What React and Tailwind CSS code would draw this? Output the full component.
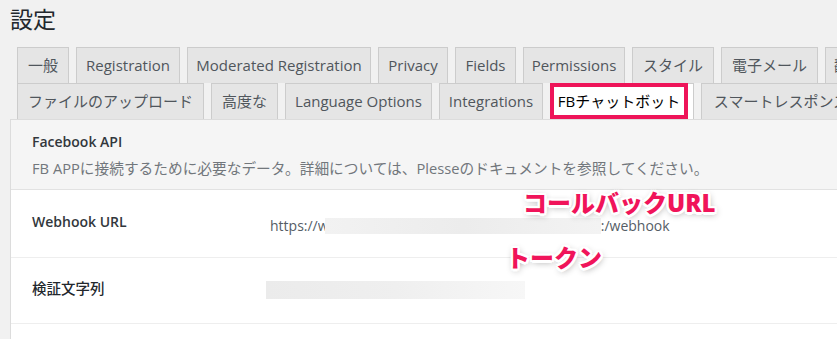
const rowOne = [
    { label: '一般', w: 'w-[52px]' },
    { label: 'Registration', w: 'w-[104px]' },
    { label: 'Moderated Registration', w: 'w-[184px]' },
    { label: 'Privacy', w: 'w-[70px]' },
    { label: 'Fields', w: 'w-[61px]' },
    { label: 'Permissions', w: 'w-[102px]' },
    { label: 'スタイル', w: 'w-[82px]' },
    { label: '電子メール', w: 'w-[97px]' },
    { label: '翻訳', w: 'w-[48px]' },
];

const rowTwo = [
    { label: 'ファイルのアップロード', w: 'w-[187px]' },
    { label: '高度な', w: 'w-[67px]' },
    { label: 'Language Options', w: 'w-[147px]' },
    { label: 'Integrations', w: 'w-[104px]' },
    { label: 'FBチャットボット', w: 'w-[144px]', active: true },
    { label: 'スマートレスポンス', w: 'w-[160px]' },
];

const Tab = ({ tab }) => {
    if (tab.active) {
        return (
            <div className={`relative shrink-0 h-[36px] bg-white border border-b-0 border-[#ccc] ${tab.w}`}>
                <div className="absolute left-[-1px] top-[-1px] w-[138px] h-[36px] border-[4px] border-[#ee1459] flex items-center justify-center text-[15px] text-black">
                    {tab.label}
                </div>
            </div>
        );
    }
    return (
        <div
            className={`shrink-0 h-[36px] flex items-center justify-center whitespace-nowrap bg-[#e5e5e5] border border-b-0 border-[#ccc] text-[15px] text-[#50565c] ${tab.w}`}
        >
            {tab.label}
        </div>
    );
};

const Annotation = ({ children, className }) => (
    <div
        className={`absolute text-[24px] leading-none font-black text-[#f0145a] whitespace-nowrap [text-shadow:2.5px_0_0_#fff,-2.5px_0_0_#fff,0_2.5px_0_#fff,0_-2.5px_0_#fff,2px_2px_0_#fff,-2px_-2px_0_#fff,2px_-2px_0_#fff,-2px_2px_0_#fff,1px_2px_7px_rgba(0,0,0,0.45)] ${className}`}
    >
        {children}
    </div>
);

const App = () => {
    return (
        <div className="relative h-[339px] w-full overflow-hidden bg-[#f1f1f1] font-['Open_Sans','Noto_Sans_CJK_JP',sans-serif]">
            <h1 className="pl-[10px] pt-[5px] text-[23px] leading-[29px] text-[#23282d]">設定</h1>

            <div className="mt-[13px] pl-[17px] overflow-hidden">
                <div className="flex gap-[7px]">
                    {rowOne.map((tab) => (
                        <Tab key={tab.label} tab={tab} />
                    ))}
                </div>
                <div className="flex gap-[7px]">
                    {rowTwo.map((tab) => (
                        <Tab key={tab.label} tab={tab} />
                    ))}
                </div>
            </div>

            <div className="ml-[10px] border-l border-t border-[#dcdcdc] bg-white">
                <div className="h-[70px] bg-[#f5f5f5] border-b border-[#e2e2e2] pl-[21px] pt-[12px]">
                    <div className="text-[14px] leading-[20px] font-semibold text-[#32373c]">Facebook API</div>
                    <div className="mt-[6px] text-[14.7px] leading-[20px] text-[#72777c] whitespace-nowrap">
                        FB APPに接続するために必要なデータ。詳細については、Plesseのドキュメントを参照してください。
                    </div>
                </div>

                <div className="flex h-[68px] border-b border-[#eeeeee] pl-[21px] pt-[22px]">
                    <div className="w-[238px] shrink-0 text-[14px] leading-[20px] font-semibold text-[#32373c]">Webhook URL</div>
                    <div className="flex items-start pt-[4px] text-[14px] leading-[20px] text-[#555d66] whitespace-nowrap">
                        <span>https://</span>
                        <span className="inline-block w-[7px] overflow-hidden">w</span>
                        <span className="inline-block mt-[2px] w-[276px] h-[16px] bg-gradient-to-r from-[#f2f2f2] via-[#ececec] to-[#f3f3f3]"></span>
                        <span>:/webhook</span>
                    </div>
                </div>

                <div className="flex h-[66px] border-b border-[#eeeeee] pl-[21px] pt-[21px]">
                    <div className="w-[234px] shrink-0 text-[14.5px] leading-[20px] font-medium text-[#23282d]">検証文字列</div>
                    <div className="mt-[2px] w-[259px] h-[18px] bg-gradient-to-r from-[#ebebeb] via-[#efefef] to-[#f7f7f7]"></div>
                </div>

                <div className="h-[40px]"></div>
            </div>

            <Annotation className="left-[523px] top-[191px]">コールバックURL</Annotation>
            <Annotation className="left-[506px] top-[246px]">トークン</Annotation>
        </div>
    );
};

export default App;
